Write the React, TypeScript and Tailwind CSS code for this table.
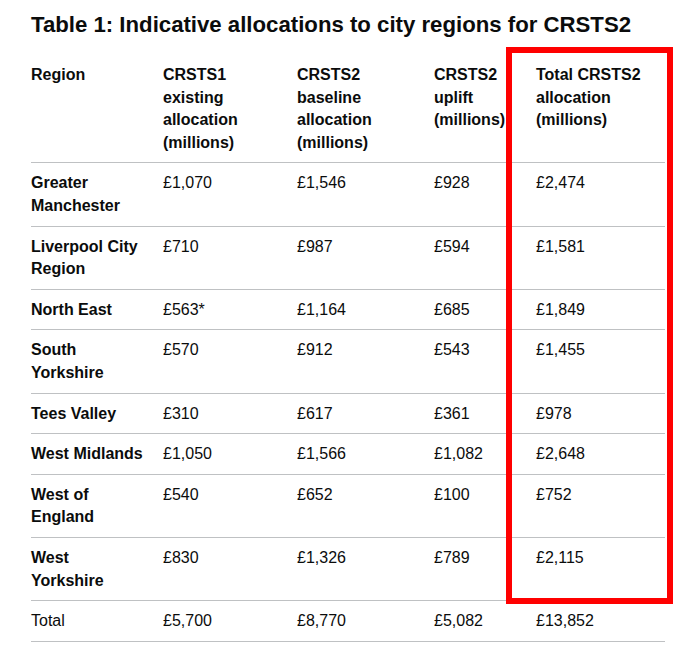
import React from "react";

const rows: [string, string, string, string, string][] = [
  ["Greater Manchester", "£1,070", "£1,546", "£928", "£2,474"],
  ["Liverpool City Region", "£710", "£987", "£594", "£1,581"],
  ["North East", "£563*", "£1,164", "£685", "£1,849"],
  ["South Yorkshire", "£570", "£912", "£543", "£1,455"],
  ["Tees Valley", "£310", "£617", "£361", "£978"],
  ["West Midlands", "£1,050", "£1,566", "£1,082", "£2,648"],
  ["West of England", "£540", "£652", "£100", "£752"],
  ["West Yorkshire", "£830", "£1,326", "£789", "£2,115"],
];

const cell = "pt-[9px] pb-[8px] pr-[20px] align-top text-left border-b border-[#bfc1c3]";
const firstCell = "pt-[9px] pb-[8px] pr-[18px] align-top text-left border-b border-[#bfc1c3]";

export default function App() {
  return (
    <div className="relative w-[680px] h-[660px] bg-white pl-[31px] pt-[11px] font-['Liberation_Sans',Arial,sans-serif] text-[#0b0c0c]">
      <h2 className="text-[22.2px] leading-[28px] font-bold mb-[16px] whitespace-nowrap">
        Table 1: Indicative allocations to city regions for CRSTS2
      </h2>
      <table className="table-fixed border-collapse w-[634px] text-[16px] leading-[22.6px]">
        <colgroup>
          <col className="w-[132px]" />
          <col className="w-[134px]" />
          <col className="w-[137px]" />
          <col className="w-[102px]" />
          <col className="w-[129px]" />
        </colgroup>
        <thead>
          <tr className="font-bold">
            <th className={firstCell}>Region</th>
            <th className={cell}>CRSTS1 existing allocation (millions)</th>
            <th className={cell}>CRSTS2 baseline allocation (millions)</th>
            <th className={cell}>CRSTS2 uplift (millions)</th>
            <th className={cell}>Total CRSTS2 allocation (millions)</th>
          </tr>
        </thead>
        <tbody>
          {rows.map((r) => (
            <tr key={r[0]}>
              <th className={firstCell + " font-bold"}>{r[0]}</th>
              <td className={cell}>{r[1]}</td>
              <td className={cell}>{r[2]}</td>
              <td className={cell}>{r[3]}</td>
              <td className={cell}>{r[4]}</td>
            </tr>
          ))}
          <tr>
            <td className={firstCell}>Total</td>
            <td className={cell}>£5,700</td>
            <td className={cell}>£8,770</td>
            <td className={cell}>£5,082</td>
            <td className={cell}>£13,852</td>
          </tr>
        </tbody>
      </table>
      <div className="absolute left-[506px] top-[47px] w-[167px] h-[557px] border-[6px] border-[#ff0000]" />
    </div>
  );
}
